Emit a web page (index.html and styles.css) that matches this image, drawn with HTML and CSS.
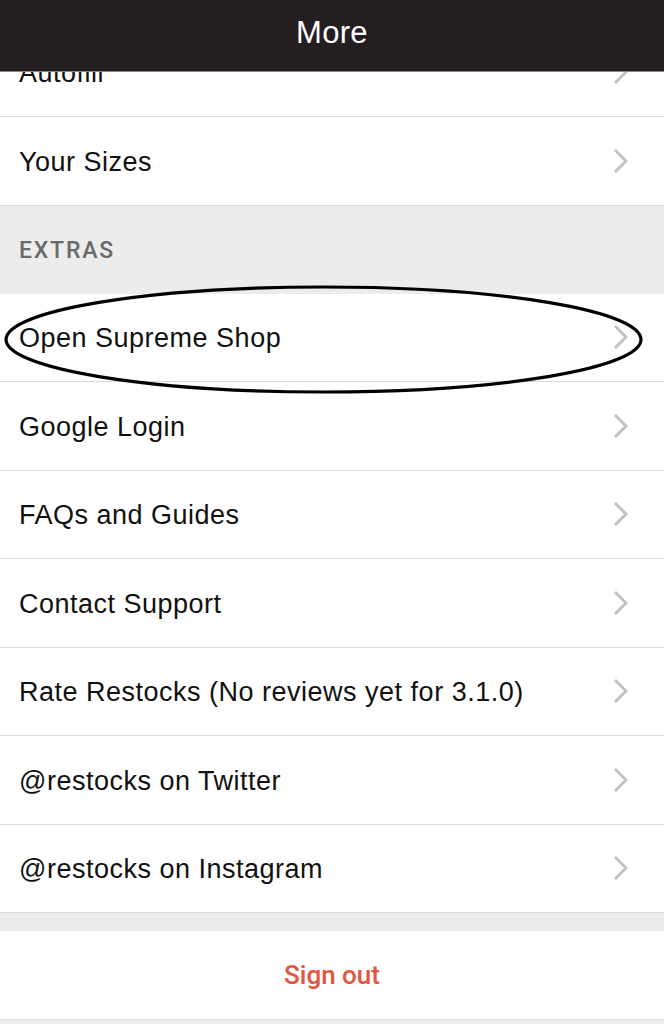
FILE: index.html
```html
<!DOCTYPE html>
<html>
<head>
<meta charset="utf-8">
<link rel="stylesheet" href="styles.css">
</head>
<body>
<div class="screen">
  <header class="nav"><span class="nav-title">More</span></header>
  <div class="list">
    <div class="row row-first"><span class="label">Autofill</span><svg class="chev" viewBox="0 0 14 24"><path d="M2 2 L12 12 L2 22" /></svg></div>
    <div class="row"><span class="label">Your Sizes</span><svg class="chev" viewBox="0 0 14 24"><path d="M2 2 L12 12 L2 22" /></svg></div>
    <div class="section">EXTRAS</div>
    <div class="row"><span class="label">Open Supreme Shop</span><svg class="chev" viewBox="0 0 14 24"><path d="M2 2 L12 12 L2 22" /></svg></div>
    <div class="row"><span class="label">Google Login</span><svg class="chev" viewBox="0 0 14 24"><path d="M2 2 L12 12 L2 22" /></svg></div>
    <div class="row"><span class="label">FAQs and Guides</span><svg class="chev" viewBox="0 0 14 24"><path d="M2 2 L12 12 L2 22" /></svg></div>
    <div class="row"><span class="label">Contact Support</span><svg class="chev" viewBox="0 0 14 24"><path d="M2 2 L12 12 L2 22" /></svg></div>
    <div class="row"><span class="label">Rate Restocks (No reviews yet for 3.1.0)</span><svg class="chev" viewBox="0 0 14 24"><path d="M2 2 L12 12 L2 22" /></svg></div>
    <div class="row"><span class="label">@restocks on Twitter</span><svg class="chev" viewBox="0 0 14 24"><path d="M2 2 L12 12 L2 22" /></svg></div>
    <div class="row"><span class="label">@restocks on Instagram</span><svg class="chev" viewBox="0 0 14 24"><path d="M2 2 L12 12 L2 22" /></svg></div>
    <div class="gap"></div>
    <div class="signout">Sign out</div>
    <div class="tail"></div>
  </div>
  <svg class="circle" viewBox="0 0 664 1024" width="664" height="1024">
    <ellipse cx="323.5" cy="339.5" rx="317.5" ry="52.5" />
  </svg>
</div>
</body>
</html>
```

FILE: styles.css
```css
html, body {
  margin: 0;
  padding: 0;
  background: #ececec;
}
.screen {
  position: relative;
  width: 664px;
  height: 1024px;
  overflow: hidden;
  background: #ececec;
  font-family: "Liberation Sans", Arial, sans-serif;
}
.nav {
  position: absolute;
  left: 0;
  top: 0;
  width: 664px;
  height: 72px;
  background: #231f20;
  border-bottom: 1px solid #8a8a8a;
  box-sizing: border-box;
  display: flex;
  align-items: center;
  justify-content: center;
  z-index: 2;
}
.nav-title {
  color: #ffffff;
  font-size: 31px;
  letter-spacing: 0.3px;
  margin-top: -6px;
}
.list {
  display: flex;
  flex-direction: column;
  padding-top: 28.5px;
}
.row {
  height: 88.5px;
  box-sizing: border-box;
  background: #ffffff;
  border-bottom: 1px solid #d9d9d9;
  display: flex;
  align-items: center;
  justify-content: space-between;
  padding: 0 36px 0 19px;
}
.label {
  font-size: 27px;
  letter-spacing: 0.5px;
  color: #111111;
  margin-top: 3px;
}
.chev {
  width: 14px;
  height: 24px;
  fill: none;
  stroke: #c2c2c4;
  stroke-width: 3;
  stroke-linecap: square;
}
.section {
  height: 88px;
  box-sizing: border-box;
  display: flex;
  align-items: center;
  padding-left: 19px;
  padding-top: 2px;
  font-family: Roboto, "Liberation Sans", sans-serif;
  font-weight: 500;
  font-size: 23px;
  letter-spacing: 1.8px;
  color: #6a6a6a;
  background: #ececec;
}
.gap {
  height: 18px;
  background: #ececec;
}
.signout {
  height: 88px;
  background: #ffffff;
  display: flex;
  align-items: center;
  justify-content: center;
  font-family: Roboto, "Liberation Sans", sans-serif;
  font-weight: 500;
  font-size: 26px;
  color: #e2553f;
  border-bottom: 1px solid #e2e2e2;
}
.tail {
  height: 10px;
  background: #ececec;
}
.circle {
  position: absolute;
  left: 0;
  top: 0;
  fill: none;
  stroke: #000000;
  stroke-width: 3.2;
  z-index: 1;
  pointer-events: none;
}
```
